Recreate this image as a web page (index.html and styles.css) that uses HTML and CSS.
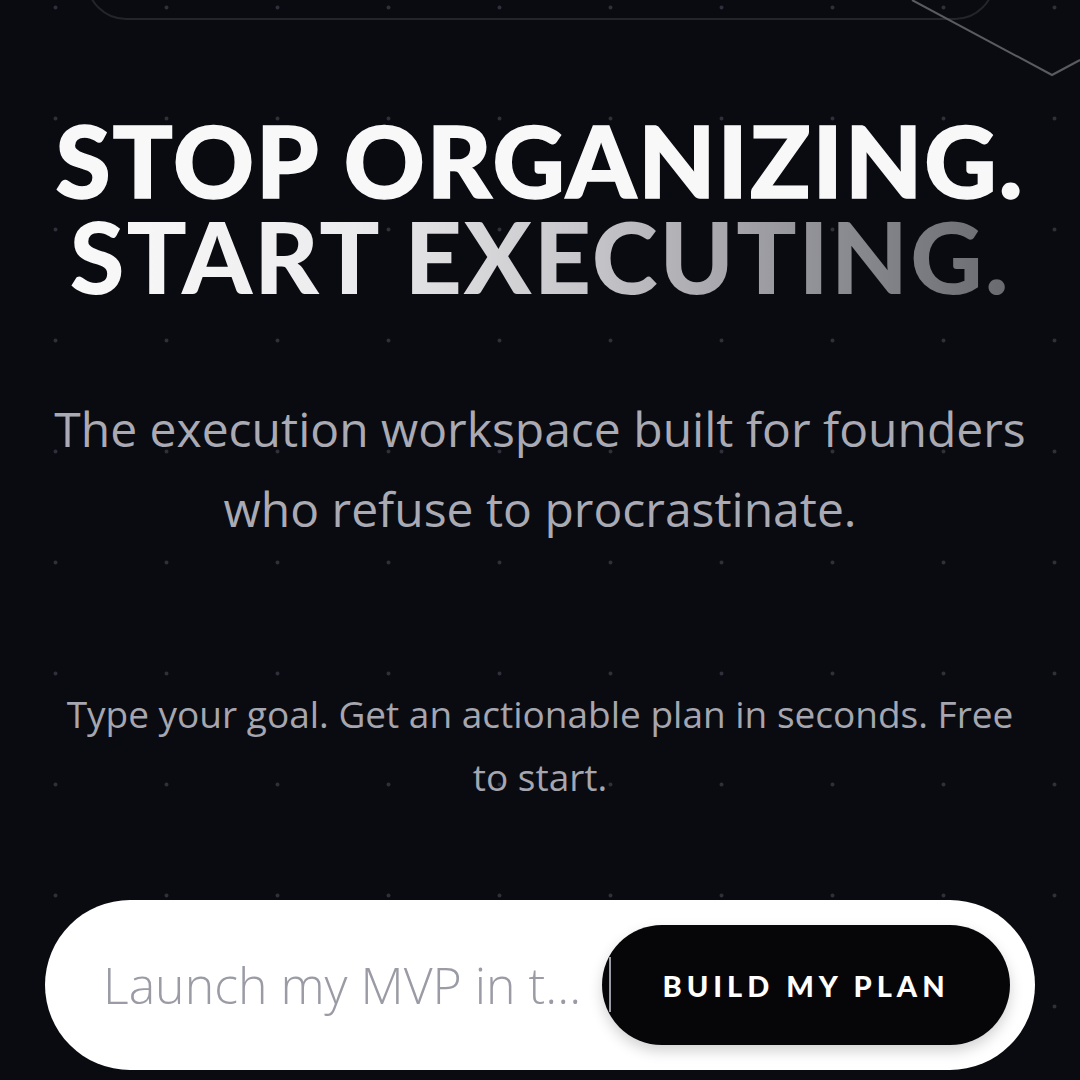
FILE: index.html
```html
<!DOCTYPE html>
<html lang="en">
<head>
<meta charset="utf-8">
<title>Execute</title>
<link rel="stylesheet" href="styles.css">
</head>
<body>
<div class="page">
  <header class="nav"></header>
  <svg class="decor" width="170" height="80" viewBox="0 0 170 80" aria-hidden="true">
    <polyline points="2,0 142,75 170,60" fill="none" stroke="#5a5b62" stroke-width="2"/>
  </svg>
  <main class="hero">
    <h1 class="title">
      <span class="line">STOP ORGANIZING.</span>
      <span class="line grad">START EXECUTING.</span>
    </h1>
    <p class="subtitle">The execution workspace built for founders who refuse to procrastinate.</p>
    <p class="lead">Type your goal. Get an actionable plan in seconds. Free to start.</p>
    <form class="goal">
      <input class="goal-input" type="text" placeholder="Launch my MVP in t...">
      <span class="caret"></span>
      <button class="goal-btn" type="button">BUILD MY PLAN</button>
    </form>
  </main>
</div>
</body>
</html>
```
FILE: styles.css
```css
html, body {
  margin: 0;
  padding: 0;
}
body {
  background-color: #0a0b10;
  background-image: radial-gradient(circle, #2f313a 0, #2f313a 1.4px, rgba(10,11,16,0) 2.4px);
  background-size: 111px 111px;
  background-position: 0 -48px;
  font-family: "Open Sans", "Noto Sans", sans-serif;
  overflow: hidden;
}
.page {
  position: relative;
  width: 1080px;
  height: 1080px;
  overflow: hidden;
}
.nav {
  height: 100px;
  margin: -80px 85px 0 86px;
  border: 2px solid #24252b;
  border-radius: 40px;
  box-sizing: border-box;
}
.decor {
  position: absolute;
  top: 0;
  right: 0;
}
.hero {
  display: flex;
  flex-direction: column;
  align-items: center;
  text-align: center;
}
.title {
  margin: 91px 0 0;
  font-family: "Lato", sans-serif;
  font-weight: 900;
  font-size: 100px;
  line-height: 96px;
  color: #f8f8f9;
  letter-spacing: 2px;
  -webkit-text-stroke: 1.5px #f8f8f9;
}
.line {
  display: block;
}
.grad {
  background: linear-gradient(90deg, #fafafa 0%, #ececee 30%, #c6c6ca 55%, #8d8d94 80%, #66666d 100%);
  -webkit-background-clip: text;
  background-clip: text;
  color: transparent;
  -webkit-text-stroke: 0;
}
.subtitle {
  margin: 86px 0 0;
  width: 1000px;
  font-size: 48px;
  line-height: 80px;
  color: #a9aab4;
}
.lead {
  margin: 133px 0 0;
  width: 985px;
  font-size: 37px;
  line-height: 63px;
  font-weight: 500;
  color: #a5a6af;
}
.goal {
  position: relative;
  margin: 92px 0 0;
  width: 990px;
  height: 170px;
  box-sizing: border-box;
  padding: 25px 25px 25px 58px;
  display: flex;
  align-items: center;
  background: #ffffff;
  border-radius: 85px;
}
.goal-input {
  flex: 1;
  min-width: 0;
  border: 0;
  outline: none;
  background: transparent;
  font-family: "Open Sans", "Noto Sans", sans-serif;
  font-weight: 300;
  font-size: 50px;
  color: #1a1a1f;
  padding: 0;
}
.goal-input::placeholder {
  color: #9a9ba5;
}
.caret {
  position: absolute;
  left: 564px;
  top: 57px;
  width: 2px;
  height: 55px;
  background: #9a9ba5;
  z-index: 2;
}
.goal-btn {
  width: 408px;
  height: 120px;
  border: 0;
  border-radius: 60px;
  background: #060608;
  color: #ffffff;
  font-family: "Lato", sans-serif;
  font-weight: 900;
  font-size: 29px;
  letter-spacing: 5px;
  box-shadow: 0 6px 14px rgba(0,0,0,0.18);
}
```
